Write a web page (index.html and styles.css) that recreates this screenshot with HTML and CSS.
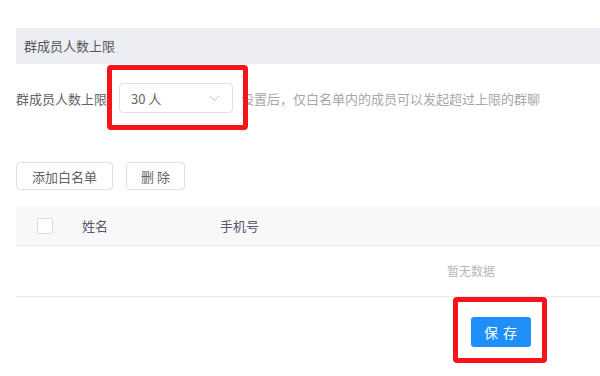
FILE: index.html
```html
<!DOCTYPE html>
<html lang="zh-CN">
<head>
  <meta charset="UTF-8" />
  <title>群成员人数上限</title>
  <link rel="stylesheet" href="styles.css">
</head>
<body>
  <div class="page">
    <div class="section-title">群成员人数上限</div>

    <div class="form-row">
      <span class="form-label">群成员人数上限</span>
      <div class="mark-wrap">
        <div class="select">
          <span>30 人</span>
          <svg class="arrow" width="11" height="7" viewBox="0 0 11 7"><path d="M1 1l4.5 4.5L10 1" fill="none" stroke="#c0c4cc" stroke-width="1"/></svg>
        </div>
        <div class="red-mark select-mark"></div>
      </div>
      <span class="hint">设置后，仅白名单内的成员可以发起超过上限的群聊</span>
    </div>

    <div class="actions">
      <button class="btn">添加白名单</button>
      <button class="btn btn-del">删 除</button>
    </div>

    <div class="table">
      <div class="thead">
        <div class="col-check"><span class="checkbox"></span></div>
        <div class="col-name">姓名</div>
        <div class="col-phone">手机号</div>
      </div>
      <div class="empty">暂无数据</div>
    </div>

    <div class="footer">
      <div class="save-frame">
        <button class="btn-primary">保 存</button>
      </div>
    </div>
  </div>
</body>
</html>
```

FILE: styles.css
```css
body {
  margin: 0;
  overflow: hidden;
  background: #fff;
  font-family: "Noto Sans CJK SC", "Liberation Sans", sans-serif;
  font-size: 13px;
  color: #515a6e;
}
.page {
  padding-left: 16px;
}
.section-title {
  margin-top: 28px;
  height: 36px;
  line-height: 36px;
  padding-left: 8px;
  background: #eceef3;
  color: #555;
}
.form-row {
  display: flex;
  align-items: center;
  margin-top: 19px;
  height: 30px;
}
.form-label {
  width: 103px;
  color: #606266;
}
.mark-wrap {
  position: relative;
}
.select {
  width: 114px;
  height: 30px;
  box-sizing: border-box;
  border: 1px solid #dcdfe6;
  border-radius: 4px;
  display: flex;
  align-items: center;
  justify-content: space-between;
  padding: 0 12px 0 11px;
  color: #606266;
  font-size: 13px;
}
.hint {
  margin-left: 8px;
  color: #a4a7ad;
  font-size: 13px;
}
.red-mark {
  position: absolute;
  box-sizing: border-box;
  border: 5px solid #f4141a;
  border-radius: 4px;
}
.select-mark {
  left: -12px;
  top: -18px;
  width: 141px;
  height: 65px;
}
.actions {
  margin-top: 49px;
  display: flex;
  gap: 13px;
}
.btn {
  height: 28px;
  padding: 0 15px;
  border: 1px solid #dcdfe6;
  border-radius: 4px;
  background: #fff;
  color: #606266;
  font-family: inherit;
  font-size: 13px;
}
.btn-del {
  width: 59px;
  padding: 0;
}
.table {
  margin-top: 16px;
}
.thead {
  display: flex;
  align-items: center;
  height: 39px;
  background: #f8f8f9;
  border-bottom: 1px solid #e8eaec;
  color: #515a6e;
}
.col-check {
  width: 66px;
  padding-left: 21px;
  box-sizing: border-box;
  display: flex;
}
.checkbox {
  width: 14px;
  height: 14px;
  border: 1px solid #dcdee2;
  border-radius: 2px;
  background: #fff;
}
.col-name {
  width: 138px;
}
.empty {
  height: 50px;
  line-height: 50px;
  padding-left: 431px;
  color: #b5b8be;
  font-size: 12px;
  border-bottom: 1px solid #e8eaec;
}
.footer {
  display: flex;
  padding-left: 437px;
}
.save-frame {
  border: 5px solid #f4141a;
  border-radius: 4px;
  padding: 15px 11px 11px 13px;
}
.btn-primary {
  display: block;
  width: 60px;
  height: 30px;
  border: none;
  border-radius: 3px;
  background: #1f8ffa;
  color: #fff;
  font-family: inherit;
  font-size: 14px;
  letter-spacing: 1px;
}
```
